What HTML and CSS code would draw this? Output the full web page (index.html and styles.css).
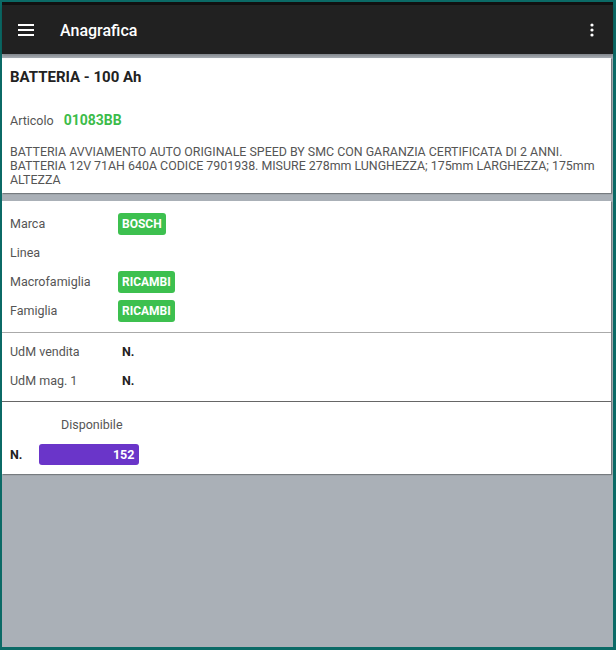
FILE: index.html
```html
<!DOCTYPE html>
<html lang="it">
<head>
    <meta charset="UTF-8">
    <meta name="viewport" content="width=device-width, initial-scale=1.0">
    <title>Anagrafica</title>
    <link rel="stylesheet" href="styles.css">
</head>
<body>
    <div class="screen">
        <div class="status-strip"></div>
        <header class="toolbar">
            <button class="icon-btn" aria-label="Menu">
                <svg width="18" height="14" viewBox="0 0 18 14">
                    <rect x="0" y="1" width="16" height="2" fill="#fff"/>
                    <rect x="0" y="6" width="16" height="2" fill="#fff"/>
                    <rect x="0" y="11" width="16" height="2" fill="#fff"/>
                </svg>
            </button>
            <h1 class="toolbar-title">Anagrafica</h1>
            <button class="icon-btn more" aria-label="Altro">
                <svg width="4" height="14" viewBox="0 0 4 14">
                    <circle cx="2" cy="2" r="1.6" fill="#fff"/>
                    <circle cx="2" cy="7" r="1.6" fill="#fff"/>
                    <circle cx="2" cy="12" r="1.6" fill="#fff"/>
                </svg>
            </button>
        </header>

        <main class="content">
            <section class="card">
                <h2 class="item-title">BATTERIA - 100 Ah</h2>
                <div class="code-row">
                    <span class="label">Articolo</span>
                    <span class="code">01083BB</span>
                </div>
                <p class="description">BATTERIA AVVIAMENTO AUTO ORIGINALE SPEED BY SMC CON GARANZIA CERTIFICATA DI 2 ANNI.<br>BATTERIA 12V 71AH 640A CODICE 7901938. MISURE 278mm LUNGHEZZA; 175mm LARGHEZZA; 175mm ALTEZZA</p>
            </section>

            <section class="card">
                <div class="group">
                    <div class="row">
                        <span class="label">Marca</span>
                        <span class="tag">BOSCH</span>
                    </div>
                    <div class="row">
                        <span class="label">Linea</span>
                    </div>
                    <div class="row">
                        <span class="label">Macrofamiglia</span>
                        <span class="tag">RICAMBI</span>
                    </div>
                    <div class="row">
                        <span class="label">Famiglia</span>
                        <span class="tag">RICAMBI</span>
                    </div>
                </div>

                <div class="group units">
                    <div class="row">
                        <span class="label">UdM vendita</span>
                        <span class="value">N.</span>
                    </div>
                    <div class="row">
                        <span class="label">UdM mag. 1</span>
                        <span class="value">N.</span>
                    </div>
                </div>

                <div class="group stock">
                    <div class="stock-head">Disponibile</div>
                    <div class="stock-row">
                        <span class="value">N.</span>
                        <span class="stock-bar">152</span>
                    </div>
                </div>
            </section>
        </main>
    </div>
</body>
</html>
```

FILE: styles.css
```css
* {
    margin: 0;
    padding: 0;
    box-sizing: border-box;
    font-family: Roboto, "Liberation Sans", Arial, sans-serif;
}

html, body {
    height: 100%;
}

body {
    background-color: #0b6a66;
    padding: 2px 3px 3px 2px;
}

.screen {
    height: 100%;
    background-color: #aab0b7;
    display: flex;
    flex-direction: column;
}

.status-strip {
    height: 3px;
    background-color: #111;
}

.toolbar {
    height: 49px;
    background-color: #212121;
    display: flex;
    align-items: center;
    padding: 0 16px;
    box-shadow: 0 2px 3px rgba(0, 0, 0, 0.25);
    position: relative;
    z-index: 1;
}

.icon-btn {
    background: none;
    border: none;
    display: flex;
    align-items: center;
    cursor: pointer;
}

.toolbar-title {
    flex: 1;
    margin: 2px 0 0 24px;
    color: #fff;
    font-size: 16px;
    font-weight: 500;
}

.more {
    margin-right: 3px;
}

.content {
    padding: 4px 2px 0 0;
}

.card {
    background: #fff;
    box-shadow: 1px 1px 1px rgba(0, 0, 0, 0.3);
    margin-bottom: 8px;
}

.item-title {
    font-size: 15px;
    font-weight: 700;
    color: #222;
    padding: 10px 8px 0;
    height: 45px;
}

.code-row {
    display: flex;
    align-items: baseline;
    padding: 9px 8px 0;
}

.label {
    font-size: 12.5px;
    color: #555;
}

.code {
    margin-left: 10px;
    font-size: 14px;
    font-weight: 700;
    color: #3cbc4a;
}

.description {
    padding: 17px 8px 6px;
    font-size: 12.4px;
    line-height: 14px;
    color: #555;
}

.group {
    padding: 8px 0 7px;
    border-bottom: 1px solid #aaa;
}

.row {
    display: flex;
    align-items: center;
    height: 29px;
    padding-left: 8px;
}

.row .label {
    width: 108px;
}

.tag {
    background-color: #3dc04f;
    color: #fff;
    font-size: 12px;
    font-weight: 700;
    padding: 4px 4px;
    border-radius: 3px;
}

.value {
    font-size: 12.5px;
    font-weight: 700;
    color: #222;
}

.units .value {
    margin-left: 4px;
}

.units {
    padding: 4px 0 6px;
    border-bottom-color: #666;
}

.stock {
    border-bottom: none;
    padding: 15px 8px 9px;
}

.stock-head {
    margin-left: 51px;
    font-size: 12.5px;
    color: #555;
}

.stock-row {
    display: flex;
    align-items: center;
    margin-top: 12px;
}

.stock-bar {
    margin-left: 17px;
    width: 100px;
    height: 21px;
    background-color: #6a35c9;
    border-radius: 3px;
    color: #fff;
    font-size: 12.5px;
    font-weight: 700;
    text-align: right;
    line-height: 21px;
    padding-right: 5px;
}
```
